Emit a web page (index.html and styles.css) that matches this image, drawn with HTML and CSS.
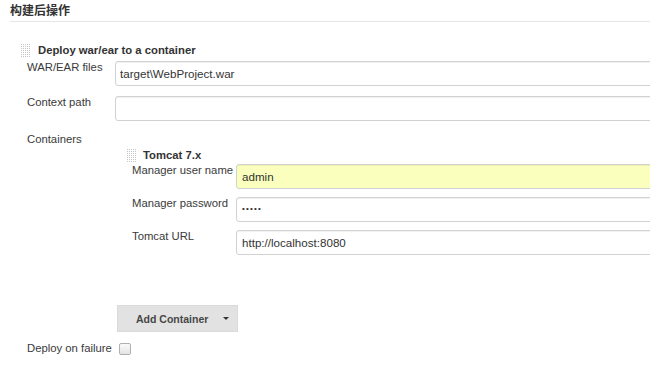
FILE: index.html
```html
<!DOCTYPE html>
<html lang="zh">
<head>
<meta charset="utf-8">
<title>构建后操作</title>
<link rel="stylesheet" href="styles.css">
</head>
<body>
<div class="page">
  <h2 class="section-title">构建后操作</h2>
  <div class="builder">
    <div class="builder-head">
      <svg class="handle" width="9" height="13" viewBox="0 0 9 13"><defs><pattern id="dots1" width="2" height="2" patternUnits="userSpaceOnUse"><rect width="1" height="1" fill="#c4c4c4"/></pattern></defs><rect width="9" height="13" fill="url(#dots1)"/></svg>
      <span class="builder-title">Deploy war/ear to a container</span>
    </div>
    <div class="form">
      <label class="lbl">WAR/EAR files</label>
      <div class="field"><input class="txt" type="text" value="target\WebProject.war"></div>
      <label class="lbl">Context path</label>
      <div class="field"><input class="txt" type="text" value=""></div>
      <label class="lbl lbl-containers">Containers</label>
      <div class="field containers">
        <div class="builder inner">
          <div class="builder-head">
            <svg class="handle" width="9" height="13" viewBox="0 0 9 13"><defs><pattern id="dots2" width="2" height="2" patternUnits="userSpaceOnUse"><rect width="1" height="1" fill="#c4c4c4"/></pattern></defs><rect width="9" height="13" fill="url(#dots2)"/></svg>
            <span class="builder-title">Tomcat 7.x</span>
          </div>
          <div class="form inner-form">
            <label class="lbl">Manager user name</label>
            <div class="field"><input class="txt autofill" type="text" value="admin"></div>
            <label class="lbl">Manager password</label>
            <div class="field"><input class="txt pw" type="password" value="admin"></div>
            <label class="lbl">Tomcat URL</label>
            <div class="field"><input class="txt" type="text" value="http://localhost:8080"></div>
          </div>
        </div>
        <div class="add-btn">Add Container<span class="caret"></span></div>
      </div>
      <label class="lbl">Deploy on failure</label>
      <div class="field"><span class="checkbox"></span></div>
    </div>
  </div>
</div>
</body>
</html>
```
FILE: styles.css
```css
html, body {
  margin: 0;
  padding: 0;
  background: #ffffff;
  overflow: hidden;
}
body {
  font-family: "Liberation Sans", Arial, "Noto Sans CJK SC", sans-serif;
  font-size: 11.3px;
  color: #333333;
}
.page {
  width: 680px;
  padding-left: 10px;
}
.section-title {
  margin: 0;
  padding: 5px 0 3px 0;
  line-height: 13px;
  font-size: 12px;
  font-weight: bold;
  color: #333333;
  border-bottom: 1px solid #e6e6e6;
}
.builder {
  margin-left: 11px;
  margin-top: 21px;
}
.builder-head {
  display: flex;
  align-items: center;
  height: 14px;
  line-height: 14px;
}
.handle {
  display: block;
  flex: none;
}
.builder-title {
  margin-left: 8px;
  font-weight: bold;
  color: #333333;
}
.form {
  display: grid;
  grid-template-columns: 88px 1fr;
  row-gap: 10px;
  margin-top: 4px;
  padding-left: 6px;
}
.lbl {
  line-height: 14px;
  margin-top: -1px;
  color: #3a3a3a;
}
.lbl-containers {
  margin-top: 1px;
}
.field {
  min-width: 0;
}
.txt {
  display: block;
  box-sizing: border-box;
  width: 100%;
  height: 25px;
  margin: 0;
  padding: 0 4px;
  border: 1px solid #d2d2d2;
  border-radius: 3px;
  box-shadow: inset 0 1px 1px rgba(0, 0, 0, 0.06);
  background: #ffffff;
  font-family: "Liberation Sans", Arial, sans-serif;
  font-size: 11.6px;
  color: #333333;
  outline: none;
}
.pw {
  font-size: 8px;
  letter-spacing: 1.2px;
  padding-bottom: 3px;
}
.autofill {
  background: #faffbd;
}
.containers {
  display: flex;
  flex-direction: column;
}
.inner {
  margin-left: 12px;
  margin-top: 17px;
}
.inner .builder-title {
  margin-left: 7px;
}
.inner-form {
  grid-template-columns: 104px 1fr;
  row-gap: 8px;
  margin-top: 2px;
  padding-left: 5px;
}
.inner-form .txt {
  padding-left: 5px;
}
.add-btn {
  display: flex;
  align-items: center;
  box-sizing: border-box;
  width: 121px;
  height: 27px;
  margin: 50px 0 0 2px;
  padding-left: 18px;
  background: #e2e2e2;
  border: 1px solid #dadada;
  font-size: 10.5px;
  font-weight: bold;
  color: #474747;
}
.caret {
  margin-left: 15px;
  width: 0;
  height: 0;
  border-left: 3px solid transparent;
  border-right: 3px solid transparent;
  border-top: 3px solid #333333;
}
.checkbox {
  display: block;
  box-sizing: border-box;
  width: 12px;
  height: 12px;
  margin: 1px 0 0 4px;
  border: 1px solid #b0b0b0;
  border-radius: 2px;
  background: linear-gradient(#fafafa, #e4e4e4);
}
```
